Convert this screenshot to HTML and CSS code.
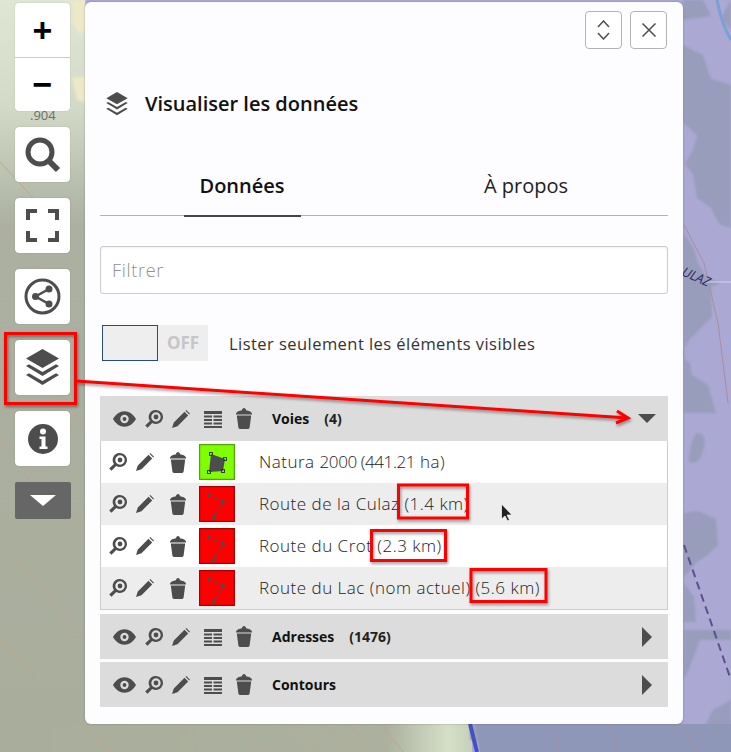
FILE: index.html
```html
<!DOCTYPE html>
<html lang="fr">
<head>
<meta charset="utf-8">
<title>Visualiser les données</title>
<link rel="stylesheet" href="styles.css">
</head>
<body>

<!-- Map background -->
<svg class="map" viewBox="0 0 731 752" preserveAspectRatio="none">
 <defs>
  <linearGradient id="leftGrad" x1="0" y1="0" x2="0" y2="1">
   <stop offset="0" stop-color="#dfe6d3"/>
   <stop offset=".14" stop-color="#d3dbc8"/>
   <stop offset=".3" stop-color="#abb0a0"/>
   <stop offset="1" stop-color="#a8ad9c"/>
  </linearGradient>
  <linearGradient id="bottomGrad" x1="0" y1="0" x2="1" y2="0">
   <stop offset="0" stop-color="#a9ad9c"/>
   <stop offset=".82" stop-color="#abb09f"/>
   <stop offset=".95" stop-color="#d6dfc8"/>
   <stop offset="1" stop-color="#c6cfb8"/>
  </linearGradient>
  <filter id="soft"><feGaussianBlur stdDeviation="1"/></filter>
 </defs>
 <rect width="731" height="752" fill="#aba8d4"/>
 <rect width="85" height="752" fill="url(#leftGrad)"/>
 <rect y="724" width="472" height="28" fill="url(#bottomGrad)"/>
 <path d="M72 0h13v30l-6 4-7-12zM72 78l13-2v26l-8-2z" fill="#ece8c8" filter="url(#soft)"/>
 <path d="M0 162 70 238M0 225 70 300M0 330 84 425M0 440 84 530M20 560 84 640M0 640 110 752M178 726l22 26M243 726l20 26M292 726l24 26M327 726l20 26M351 726l20 26M383 726l20 26" stroke="#bda88e" stroke-width="1" fill="none"/>

 <g fill="#989dbb" filter="url(#soft)">
  <path d="M683 0h20l8 16-28 4zM731 0v30l-10-12z"/>
  <path d="M683 45l20 10 8 24 20 6v143l-12-4-8-16-14-10-4-24-8-10 8-14 4-14-14-14z"/>
  <path d="M684 233l10 16 4 14 8 14 15 6-10 4 1 30-14 14-8 8-10 16 10 8 2 12 16 10 8 28-32 0z"/>
  <path d="M698 433c6 0 8 6 6 14-2 10-6 16-12 16-4 0-4-6-2-12 2-10 4-18 8-18z"/>
  <path d="M684 513l14-2 18 8 2 26-10 10-10 6-14 16z"/>
  <path d="M684 583l10 14 2 25h-12zM684 630h47v122H520l-50-12v-16h213z"/>
 </g>
 <path d="M700 640l31 0v60l-18 10-10 20 4 22h-12l-8-12-4-16-8-34 12-16z" fill="#aba8d4" filter="url(#soft)"/>
 <path d="M717 0c3 16 8 30 14 40" stroke="#7d9fd8" stroke-width="3" fill="none"/>
 <path d="M684 545l47 135" stroke="#5f4f8e" stroke-width="2" stroke-dasharray="8 5" fill="none"/>
 <path d="M470 724l7 28" stroke="#4450c4" stroke-width="4" fill="none"/>
 <path d="M476 724h255v28H480z" fill="#8f97b8"/>
 <path d="M684 225l20 38 14 60 10 80M553 724l6 28M610 724l8 28M684 724l14 28" stroke="#a98f9e" stroke-width="1" fill="none"/>
 <path d="M706 282h25" stroke="#d6d4ea" stroke-width="1"/>
 <text class="map-road" transform="translate(681 275) rotate(24)">ULAZ</text>
</svg>
<div class="map-label">.904</div>

<!-- Icons used many times -->
<svg class="defs" width="0" height="0">
 <symbol id="i-eye" viewBox="0 0 24 16">
  <path fill-rule="evenodd" d="M0 8C3 3 7 0 12 0s9 3 12 8c-3 5-7 8-12 8S3 13 0 8zm12 4.400a4.400 4.400 0 1 0 0-8.800 4.400 4.400 0 0 0 0 8.800zM12 6a2 2 0 1 1 0 4 2 2 0 0 1 0-4z"/>
 </symbol>
 <symbol id="i-zoom" viewBox="0 0 18 18">
  <path fill-rule="evenodd" d="M11 0a7 7 0 1 1-3.800 12.900L2.500 17.800.2 15.500l4.700-4.600A7 7 0 0 1 11 0zm0 2.300a4.700 4.700 0 1 0 0 9.400 4.700 4.700 0 0 0 0-9.400zM11 4.600a2.400 2.400 0 1 1 0 4.800 2.400 2.400 0 0 1 0-4.800z"/>
 </symbol>
 <symbol id="i-pen" viewBox="0 0 18 18">
  <path d="M0 18l1.800-5.500L12.500 1.800l3.700 3.700L5.500 16.200zM13.500.8 14.300 0 18 3.700l-.8.8z"/>
 </symbol>
 <symbol id="i-table" viewBox="0 0 18 18">
  <path d="M0 1h18v3H0zM0 5.500h8v2H0zM9.500 5.500H18v2H9.500zM0 9h8v2H0zM9.500 9H18v2H9.500zM0 12.500h8v2H0zM9.500 12.500H18v2H9.500zM0 16h18v2H0z"/>
 </symbol>
 <symbol id="i-trash" viewBox="0 0 16 21">
  <path d="M6 2.200C6 1 7 0 8 0s2 1 2 2.200c3 .4 5 1.500 6 3.300v1H0v-1c1-1.800 3-2.900 6-3.300zM.8 7.600h14.400l-1.600 12c-.1.800-.7 1.400-1.500 1.400H3.900c-.8 0-1.400-.6-1.500-1.400z"/>
 </symbol>
 <symbol id="i-layers" viewBox="0 0 33 37">
  <path d="M16.500 0 33 9.500 16.500 19 0 9.500zM0 17l3-1.700 13.500 7.700L30 15.300l3 1.700-16.500 10zM0 26l3-1.700 13.500 7.700L30 24.300l3 1.700-16.500 10z"/>
 </symbol>
 <symbol id="i-line" viewBox="0 0 34 34">
  <g fill="none" stroke="#4d4d4d"><path d="M10 9.500 24 14.500 13 30"/><rect x="8.500" y="7.500" width="3" height="3" fill="#f00"/><rect x="22.500" y="12.500" width="3" height="3" fill="#f00"/><rect x="11.500" y="28.500" width="3" height="3" fill="#f00"/></g>
 </symbol>
 <symbol id="i-poly" viewBox="0 0 34 34">
  <path d="M11 9l14 5-2 12-14 1z" fill="#4d4d4d"/>
  <g fill="none" stroke="#3a3a3a"><rect x="9.500" y="7.500" width="3" height="3"/><rect x="23.500" y="12.500" width="3" height="3"/><rect x="21.500" y="24.500" width="3" height="3"/><rect x="7.500" y="25.500" width="3" height="3"/></g>
 </symbol>
</svg>

<div class="page">

 <div class="toolbar">
  <div class="tool-group">
   <button class="tool tool-text">+</button>
   <button class="tool tool-text">&minus;</button>
  </div>
  <button class="tool">
   <svg width="36" height="36" viewBox="0 0 36 36"><circle cx="15" cy="15" r="12" fill="none" stroke="#4d4d4d" stroke-width="5"/><path d="M23 23l10 10" stroke="#4d4d4d" stroke-width="6"/></svg>
  </button>
  <button class="tool">
   <svg width="33" height="33" viewBox="0 0 33 33" fill="none" stroke="#4d4d4d" stroke-width="4"><path d="M2 11V2h9M22 2h9v9M31 22v9h-9M11 31H2v-9"/></svg>
  </button>
  <button class="tool">
   <svg width="37" height="37" viewBox="0 0 37 37"><circle cx="18.500" cy="18.500" r="16.500" fill="none" stroke="#4d4d4d" stroke-width="3"/><path d="M25 11 11.500 18.500 25 26" fill="none" stroke="#4d4d4d" stroke-width="2.500"/><circle cx="25" cy="11" r="3.500" fill="#4d4d4d"/><circle cx="11.500" cy="18.500" r="3.500" fill="#4d4d4d"/><circle cx="25" cy="26" r="3.500" fill="#4d4d4d"/></svg>
  </button>
  <button class="tool"><svg class="ic-dark" width="33" height="37"><use href="#i-layers"/></svg></button>
  <button class="tool">
   <svg width="30" height="30" viewBox="0 0 30 30"><circle cx="15" cy="15" r="15" fill="#4d4d4d"/><circle cx="15" cy="7.500" r="3" fill="#fff"/><path d="M11.500 12.500h6v10h2v2.500h-8v-2.500h2v-7.500h-2z" fill="#fff"/></svg>
  </button>
  <button class="tool-more"><span class="tri-down-white"></span></button>
 </div>

 <div class="panel">
  <div class="panel-btns">
   <button class="sq-btn">
    <svg width="13" height="20" viewBox="0 0 13 20" fill="none" stroke="#4d4d4d" stroke-width="1.500"><path d="M1 7l5.500-6L12 7M1 13l5.500 6L12 13"/></svg>
   </button>
   <button class="sq-btn">
    <svg width="14" height="14" viewBox="0 0 14 14" fill="none" stroke="#4d4d4d" stroke-width="1.500"><path d="M.5.500l13 13M13.500.500l-13 13"/></svg>
   </button>
  </div>

  <div class="panel-head">
   <svg class="ic" width="24" height="24"><use href="#i-layers"/></svg>
   <h2>Visualiser les données</h2>
  </div>

  <div class="tabs">
   <div class="tab active"><span>Données</span></div>
   <div class="tab"><span>À propos</span></div>
  </div>

  <input class="filter" type="text" placeholder="Filtrer">

  <div class="toggle-row">
   <div class="toggle"><span class="toggle-knob"></span><span class="toggle-off">OFF</span></div>
   <span>Lister seulement les éléments visibles</span>
  </div>

  <div class="section">
   <div class="section-head">
    <svg class="ic eye"><use href="#i-eye"/></svg>
    <svg class="ic act"><use href="#i-zoom"/></svg>
    <svg class="ic act"><use href="#i-pen"/></svg>
    <svg class="ic act tbl"><use href="#i-table"/></svg>
    <svg class="ic bin"><use href="#i-trash"/></svg>
    <b class="sec-name">Voies</b><b class="sec-count">(4)</b>
    <span class="tri-down"></span>
   </div>
   <div class="rows">
    <div class="row">
     <svg class="ic act"><use href="#i-zoom"/></svg>
     <svg class="ic act"><use href="#i-pen"/></svg>
     <svg class="ic bin"><use href="#i-trash"/></svg>
     <span class="swatch green"><svg width="34" height="34"><use href="#i-poly"/></svg></span>
     <span class="row-name">Natura <span class="digits">2000 (441.21</span> ha)</span>
    </div>
    <div class="row">
     <svg class="ic act"><use href="#i-zoom"/></svg>
     <svg class="ic act"><use href="#i-pen"/></svg>
     <svg class="ic bin"><use href="#i-trash"/></svg>
     <span class="swatch red"><svg width="34" height="34"><use href="#i-line"/></svg></span>
     <span class="row-name">Route de la Culaz (1.4 km)</span>
    </div>
    <div class="row">
     <svg class="ic act"><use href="#i-zoom"/></svg>
     <svg class="ic act"><use href="#i-pen"/></svg>
     <svg class="ic bin"><use href="#i-trash"/></svg>
     <span class="swatch red"><svg width="34" height="34"><use href="#i-line"/></svg></span>
     <span class="row-name">Route du Crot (2.3 km)</span>
    </div>
    <div class="row">
     <svg class="ic act"><use href="#i-zoom"/></svg>
     <svg class="ic act"><use href="#i-pen"/></svg>
     <svg class="ic bin"><use href="#i-trash"/></svg>
     <span class="swatch red"><svg width="34" height="34"><use href="#i-line"/></svg></span>
     <span class="row-name">Route du Lac (nom actuel) (5.6 km)</span>
    </div>
   </div>
  </div>

  <div class="section closed first-closed">
   <div class="section-head">
    <svg class="ic eye"><use href="#i-eye"/></svg>
    <svg class="ic act"><use href="#i-zoom"/></svg>
    <svg class="ic act"><use href="#i-pen"/></svg>
    <svg class="ic act tbl"><use href="#i-table"/></svg>
    <svg class="ic bin"><use href="#i-trash"/></svg>
    <b class="sec-name">Adresses</b><b class="sec-count">(1476)</b>
    <span class="tri-right"></span>
   </div>
  </div>

  <div class="section closed">
   <div class="section-head">
    <svg class="ic eye"><use href="#i-eye"/></svg>
    <svg class="ic act"><use href="#i-zoom"/></svg>
    <svg class="ic act"><use href="#i-pen"/></svg>
    <svg class="ic act tbl"><use href="#i-table"/></svg>
    <svg class="ic bin"><use href="#i-trash"/></svg>
    <b class="sec-name">Contours</b>
    <span class="tri-right"></span>
   </div>
  </div>
 </div>
</div>

<!-- Red annotations and the mouse pointer -->
<svg class="notes" viewBox="0 0 731 752">
 <defs><filter id="sh" x="-5%" y="-20%" width="110%" height="140%"><feDropShadow dx="1" dy="2" stdDeviation="1.500" flood-color="#000" flood-opacity=".4"/></filter></defs>
 <g fill="none" stroke="#f00" stroke-width="3" filter="url(#sh)">
  <rect x="5.500" y="333.500" width="70" height="70"/>
  <path d="M76 381 628 418M617 411l11 7-12 5"/>
  <rect x="398.500" y="485" width="69" height="33"/>
  <rect x="371.500" y="530.500" width="74" height="30"/>
  <rect x="471" y="569.500" width="75" height="32"/>
 </g>
 <path d="M501.500 504v15l3.500-3 2.500 5 2-1-2.500-5h5z" fill="#222" stroke="#fff" stroke-width=".7"/>
</svg>

</body>
</html>
```

FILE: styles.css
```css
/* ---------- Base ---------- */
*{box-sizing:border-box}
html,body{margin:0;height:752px;overflow:hidden}
body{position:relative;font-family:"Open Sans",sans-serif;color:#333}
button{font-family:inherit;cursor:pointer}

.map{position:absolute;left:0;top:0;width:731px;height:752px}
.map-road{font:italic 13px "Open Sans",sans-serif;fill:#2f2a66}
.map-label{position:absolute;left:30px;top:106px;font-size:13px;color:#6d6f66}
.defs{position:absolute}
.notes{position:absolute;left:0;top:0;width:731px;height:752px;pointer-events:none}

.page{position:relative;display:flex;gap:15px;padding:2px 0 0 15px}

/* ---------- Left toolbar ---------- */
.toolbar{display:flex;flex-direction:column;align-items:center;gap:16px;width:55px;padding-top:1px}
.tool-group{display:flex;flex-direction:column;width:55px;border-radius:4px;overflow:hidden;box-shadow:0 0 1px rgba(0,0,0,.4)}
.tool{display:flex;align-items:center;justify-content:center;width:55px;height:55px;padding:0;background:#fff;border:none;border-radius:4px;box-shadow:0 0 1px rgba(0,0,0,.4)}
.tool-group .tool{height:54px;border-radius:0;box-shadow:none}
.tool-group .tool+.tool{border-top:1px solid #ccc}
.tool-text{font:700 34px "Liberation Sans",sans-serif;color:#000}
.ic-dark{fill:#4d4d4d}
.tool-more{display:flex;align-items:center;justify-content:center;width:56px;height:37px;padding:0;background:#666;border:none;border-radius:2px}
.tri-down-white{width:0;height:0;border-style:solid;border-width:11px 13px 0;border-color:#fff transparent transparent}

/* ---------- Panel ---------- */
.panel{width:598px;height:722px;padding:9px 15px 0;background:rgba(255,255,255,.97);border-radius:6px;box-shadow:0 0 2px rgba(0,0,0,.3)}
.panel-btns{display:flex;justify-content:flex-end;gap:8px;padding-right:1px}
.sq-btn{display:flex;align-items:center;justify-content:center;width:37px;height:38px;padding:0;background:#fff;border:1px solid #b3b3b3;border-radius:4px}
.panel-head{display:flex;align-items:center;gap:16px;height:24px;margin-top:43px;padding-left:5px}
.panel-head h2{margin:0 0 2px;font-size:20px;font-weight:600;color:#111}
.ic{fill:#4d4d4d;flex:none}

.tabs{display:flex;height:68px;margin-top:32px;border-bottom:1px solid #b3b3b3}
.tab{flex:1;display:flex;justify-content:center}
.tab span{display:flex;justify-content:center;height:69px;padding-top:23px;font-size:20px;color:#222;line-height:30px}
.tab.active span{width:117px;font-weight:600;color:#111;border-bottom:2px solid #444}

.filter{display:block;width:100%;height:48px;margin-top:30px;padding:0 11px;font:300 18px "Open Sans",sans-serif;letter-spacing:.7px;background:#fff;border:1px solid #ccc;border-radius:3px;box-shadow:inset 0 1px 2px rgba(0,0,0,.06)}
.filter::placeholder{color:#8f8f8f;opacity:1}

.toggle-row{display:flex;align-items:center;gap:21px;margin:31px 0 0 2px;font-size:16.500px;letter-spacing:.45px;color:#333}
.toggle{display:flex;width:106px;height:36px;background:#eee}
.toggle-knob{width:56px;height:36px;background:#eee;border:1px solid #2b4a7c}
.toggle-off{flex:1;text-align:center;font:700 17px/36px "Open Sans",sans-serif;letter-spacing:0;color:#c6c6c6}

/* ---------- Data layers ---------- */
.section{margin-top:35px}
.section.closed{margin-top:3px}
.section.first-closed{margin-top:4px}
.section-head{display:flex;align-items:center;height:45px;padding-left:13px;background:#dcdcdc}
.section-head .eye{width:23px;height:16px;margin-right:9px}
.section-head .act{width:18px;height:18px;margin-right:9px}
.section-head .tbl{margin-left:5px;margin-right:14px}
.section-head .bin{width:16px;height:21px}
.sec-name{margin-left:20px;font-size:14px;font-weight:700;color:#111}
.sec-count{margin-left:15px;font-size:14px;font-weight:700;color:#222}
.tri-down{margin-left:auto;margin-right:12px;width:0;height:0;border-style:solid;border-width:9px 9px 0;border-color:#4d4d4d transparent transparent}
.tri-right{margin-left:auto;margin-right:16px;width:0;height:0;border-style:solid;border-width:10px 0 10px 10px;border-color:transparent transparent transparent #4d4d4d}
.rows{border:1px solid #ccc;border-top:none}
.row{display:flex;align-items:center;height:42px;padding-left:8px;background:#fff}
.row:nth-child(even){background:#ededed}
.row .act{width:18px;height:18px;margin-right:9px}
.row .act+.act{margin-right:16px}
.row .bin{width:16px;height:21px}
.swatch{display:flex;width:36px;height:36px;margin-left:13px;border:1px solid rgba(0,0,0,.35);box-shadow:inset 0 0 2px rgba(0,0,0,.3)}
.swatch.green{background:#7fff00}
.swatch.red{background:#f00}
.row-name{margin:0 0 1px 24px;font-size:17px;font-weight:300;color:#222;letter-spacing:.5px;white-space:pre}
.digits{letter-spacing:-.4px}
```
